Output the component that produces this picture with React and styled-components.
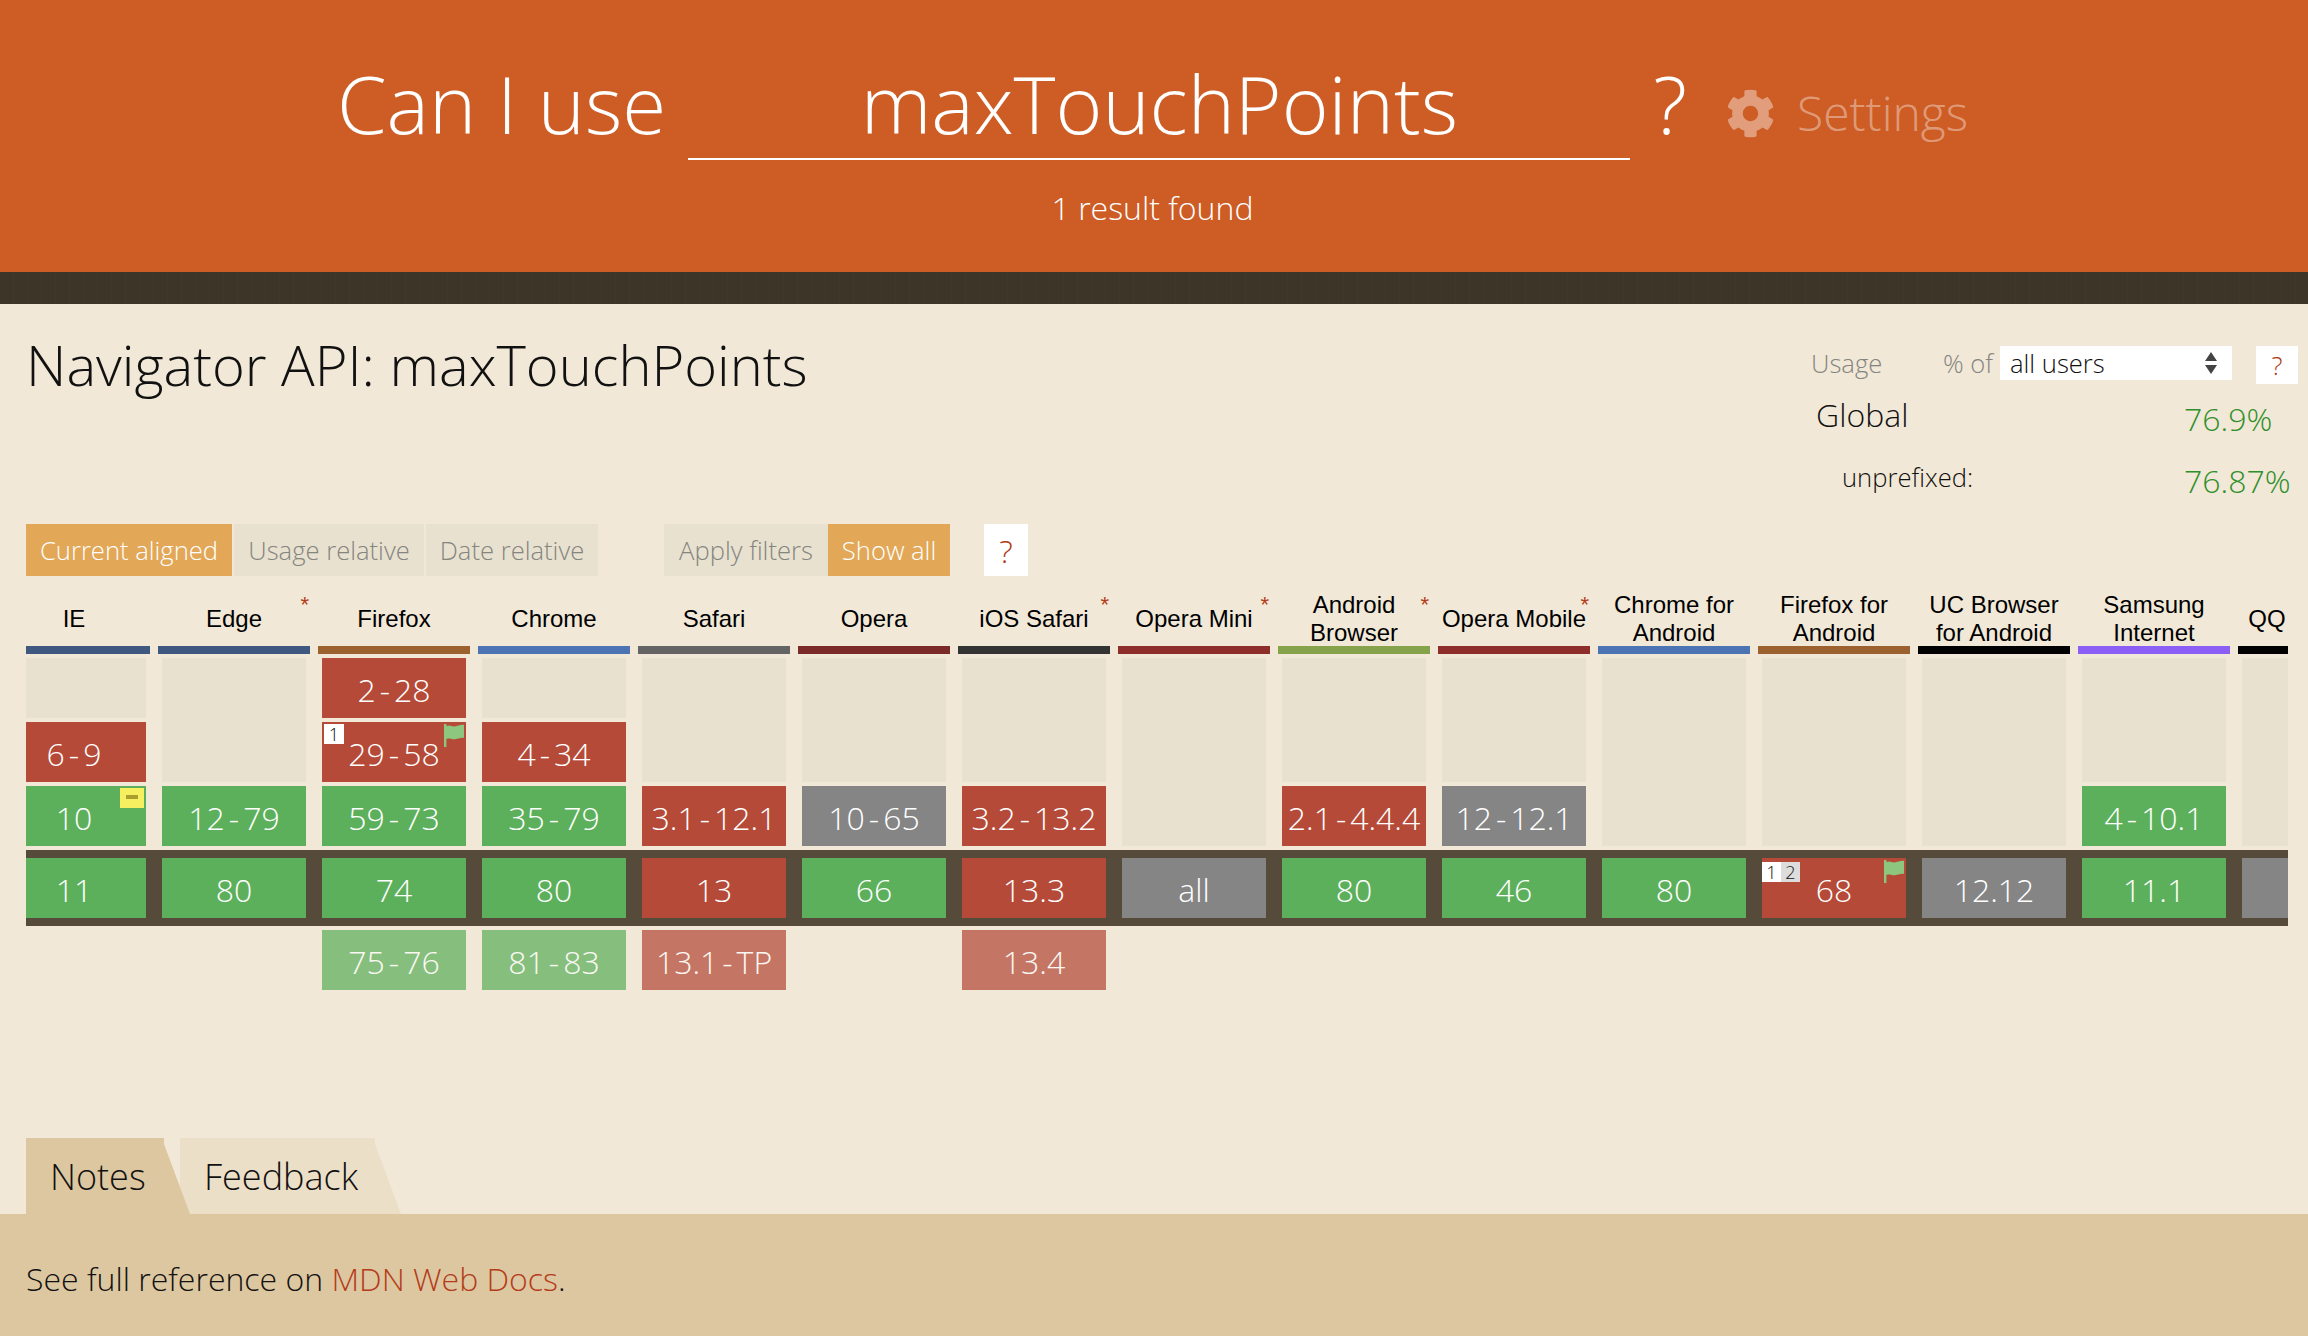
import React from 'react';
import styled, { createGlobalStyle } from 'styled-components';
import { FaCog } from 'react-icons/fa';

const sans = `"Open Sans", "Liberation Sans", sans-serif`;

const colors = {
    y: '#5db05b',
    n: '#b54a38',
    u: '#858585',
};

const browsers = [
    { name: 'IE', bar: '#3f587f', past: [{ span: 1 }, { t: 'n', v: '6-9' }, { t: 'y', v: '10', minus: true }], cur: { t: 'y', v: '11' } },
    { name: 'Edge', star: true, bar: '#3f587f', past: [{ span: 2 }, { t: 'y', v: '12-79' }], cur: { t: 'y', v: '80' } },
    { name: 'Firefox', bar: '#9b6230', past: [{ t: 'n', v: '2-28' }, { t: 'n', v: '29-58', marks: ['1'], flag: true }, { t: 'y', v: '59-73' }], cur: { t: 'y', v: '74' }, next: { t: 'y', v: '75-76' } },
    { name: 'Chrome', bar: '#4c74b2', past: [{ span: 1 }, { t: 'n', v: '4-34' }, { t: 'y', v: '35-79' }], cur: { t: 'y', v: '80' }, next: { t: 'y', v: '81-83' } },
    { name: 'Safari', bar: '#646464', past: [{ span: 2 }, { t: 'n', v: '3.1-12.1' }], cur: { t: 'n', v: '13' }, next: { t: 'n', v: '13.1-TP' } },
    { name: 'Opera', bar: '#7a2a27', past: [{ span: 2 }, { t: 'u', v: '10-65' }], cur: { t: 'y', v: '66' } },
    { name: 'iOS Safari', star: true, bar: '#333333', past: [{ span: 2 }, { t: 'n', v: '3.2-13.2' }], cur: { t: 'n', v: '13.3' }, next: { t: 'n', v: '13.4' } },
    { name: 'Opera Mini', star: true, bar: '#8d2e2b', past: [{ span: 3 }], cur: { t: 'u', v: 'all' } },
    { name: 'Android Browser', star: true, bar: '#86a24a', past: [{ span: 2 }, { t: 'n', v: '2.1-4.4.4' }], cur: { t: 'y', v: '80' } },
    { name: 'Opera Mobile', star: true, bar: '#8d2e2b', past: [{ span: 2 }, { t: 'u', v: '12-12.1' }], cur: { t: 'y', v: '46' } },
    { name: 'Chrome for Android', bar: '#4c74b2', past: [{ span: 3 }], cur: { t: 'y', v: '80' } },
    { name: 'Firefox for Android', bar: '#9b6230', past: [{ span: 3 }], cur: { t: 'n', v: '68', marks: ['1', '2'], flag: true } },
    { name: 'UC Browser for Android', bar: '#000000', past: [{ span: 3 }], cur: { t: 'u', v: '12.12' } },
    { name: 'Samsung Internet', bar: '#8b5ef5', past: [{ span: 2 }, { t: 'y', v: '4-10.1' }], cur: { t: 'y', v: '11.1' } },
    { name: 'QQ', bar: '#000000', headWidth: 50, past: [{ span: 3 }], cur: { t: 'u', v: '' } },
];

const GlobalStyle = createGlobalStyle`
    html, body {
        margin: 0;
        padding: 0;
        background: #f1e8d7;
        overflow: hidden;
    }
    body {
        font-family: ${sans};
        font-weight: 300;
    }
`;

const Page = styled.div`
    width: 2308px;
    height: 1336px;
    display: flex;
    flex-direction: column;
    overflow: hidden;
`;

const Header = styled.header`
    height: 272px;
    box-sizing: border-box;
    padding-top: 48px;
    background: #cd5d25;
    color: #fff;
`;

const SearchRow = styled.div`
    display: flex;
    justify-content: center;
    align-items: flex-start;
    height: 112px;
`;

const SearchLabel = styled.div`
    font-size: 80px;
    line-height: 110px;
    white-space: nowrap;
`;

const SearchInput = styled.div`
    width: 942px;
    height: 112px;
    box-sizing: border-box;
    margin: 0 23px 0 22px;
    border-bottom: 2px solid #fff;
    font-size: 80px;
    line-height: 110px;
    text-align: center;
`;

const SettingsLink = styled.div`
    display: flex;
    align-items: center;
    gap: 22px;
    margin: 32px 3px 0 39px;
    font-size: 48px;
    line-height: 66px;
    color: rgba(255, 255, 255, 0.4);
    svg { width: 49px; height: 49px; }
`;

const ResultCount = styled.div`
    margin-top: 26px;
    padding-right: 3px;
    text-align: center;
    font-size: 32px;
    line-height: 44px;
`;

const DarkBand = styled.div`
    height: 32px;
    background: repeating-linear-gradient(90deg, #3e3529 0 13px, #40382b 13px 14px);
`;

const Main = styled.main`
    flex: 1;
    padding-left: 26px;
`;

const TopRow = styled.div`
    display: flex;
    justify-content: space-between;
    height: 220px;
    width: 2272px;
`;

const Title = styled.h1`
    margin: 22px 0 0;
    font-size: 56px;
    line-height: 76px;
    font-weight: 300;
    color: #111;
`;

const UsagePanel = styled.div`
    width: 487px;
    padding-top: 42px;
`;

const UsageRow = styled.div`
    display: flex;
    align-items: flex-start;
    height: 38px;
    font-size: 25.6px;
    line-height: 36px;
    color: #85857f;
`;

const UsageLabel = styled.span`
    width: ${({ $w }) => $w}px;
    flex: none;
`;

const SelectBox = styled.div`
    width: 232px;
    height: 34px;
    box-sizing: border-box;
    padding: 2px 0 0 10px;
    flex: none;
    display: flex;
    align-items: center;
    justify-content: space-between;
    background: #fff;
    color: #111;
    font-size: 25.6px;
    line-height: 32px;
    svg { margin: -2px 14px 0 0; }
`;

const HelpBox = styled.div`
    display: flex;
    align-items: center;
    justify-content: center;
    flex: none;
    width: ${({ $w }) => $w}px;
    height: ${({ $h }) => $h}px;
    margin-left: ${({ $ml }) => $ml}px;
    background: #fff;
    color: #b03a16;
    font-size: ${({ $fs }) => $fs}px;
`;

const StatRow = styled.div`
    display: grid;
    grid-template-columns: 373px 1fr;
    align-items: center;
    height: ${({ $h }) => $h}px;
`;

const StatName = styled.span`
    padding-left: ${({ $pad }) => $pad}px;
    margin-top: ${({ $shift }) => $shift}px;
    font-size: ${({ $fs }) => $fs}px;
    color: #111;
`;

const StatValue = styled.span`
    margin-top: 6px;
    font-size: 32px;
    color: #2f8f2a;
`;

const ControlRow = styled.div`
    display: flex;
    align-items: stretch;
    height: 52px;
`;

const ToggleButton = styled.div`
    display: flex;
    align-items: center;
    justify-content: center;
    box-sizing: border-box;
    width: ${({ $w }) => $w}px;
    margin-right: ${({ $mr }) => $mr || 0}px;
    font-size: 25.6px;
    white-space: nowrap;
    background: ${({ $on }) => ($on ? '#e2a858' : '#e8e1cf')};
    color: ${({ $on }) => ($on ? '#fff' : '#85857f')};
`;

const TableClip = styled.div`
    width: 2262px;
    margin-top: 10px;
    overflow: hidden;
`;

const TableInner = styled.div`
    margin-left: -32px;
    width: 2400px;
`;

const ColGrid = styled.div`
    display: grid;
    grid-template-columns: repeat(15, 160px);
`;

const BrowserHead = styled.div`
    position: relative;
    height: 68px;
    margin: 0 4px;
    width: ${({ $w }) => ($w ? `${$w}px` : 'auto')};
    box-sizing: border-box;
    padding: 5px 0 0 ${({ $w }) => ($w ? 8 : 0)}px;
    border-bottom: 8px solid ${({ $bar }) => $bar};
    display: flex;
    align-items: center;
    justify-content: center;
    text-align: center;
    font-family: "Liberation Sans", Arial, sans-serif;
    font-weight: 400;
    font-size: 24px;
    line-height: 28px;
    color: #000;
`;

const HeadStar = styled.span`
    position: absolute;
    top: 15px;
    right: 1px;
    font-size: 22px;
    line-height: 8px;
    color: #b43c1b;
`;

const PastCol = styled.div`
    display: flex;
    flex-direction: column;
    gap: 4px;
    padding: 4px 8px;
`;

const Cell = styled.div`
    position: relative;
    box-sizing: border-box;
    height: ${({ $span }) => 60 * $span + 4 * ($span - 1)}px;
    padding-top: 4px;
    display: flex;
    align-items: center;
    justify-content: center;
    font-size: 32px;
    line-height: 56px;
    white-space: nowrap;
    color: #fff;
    background: ${({ $bg }) => $bg};
    opacity: ${({ $future }) => ($future ? 0.72 : 1)};
`;

const Dash = styled.span`
    margin: 0 4px;
`;

const Band = styled.div`
    background: #564b3b;
    padding: 8px 0;
`;

const BandCol = styled.div`
    padding: 0 8px;
`;

const FutureGrid = styled(ColGrid)`
    padding-top: 4px;
`;

const Marks = styled.div`
    position: absolute;
    top: ${({ $top }) => $top}px;
    left: ${({ $left }) => $left}px;
    display: flex;
`;

const Mark = styled.span`
    width: ${({ $w }) => $w}px;
    height: 20px;
    display: flex;
    align-items: center;
    justify-content: center;
    font-size: 18px;
    line-height: 20px;
    color: #111;
    background: ${({ $second }) => ($second ? '#dddddd' : '#ffffff')};
`;

const MinusNote = styled.span`
    position: absolute;
    top: 2px;
    right: 2px;
    width: 24px;
    height: 20px;
    background: #f6f060;
    &::after {
        content: '';
        position: absolute;
        left: 6px;
        top: 7px;
        width: 12px;
        height: 4px;
        background: #a89f2f;
    }
`;

const FlagIcon = styled.svg`
    position: absolute;
    top: 2px;
    right: 2px;
    width: 20px;
    height: 23px;
`;

const Tabs = styled.div`
    display: flex;
    margin-top: 148px;
    height: 76px;
`;

const Tab = styled.div`
    position: relative;
    z-index: ${({ $on }) => ($on ? 1 : 0)};
    width: ${({ $w }) => $w}px;
    margin-right: ${({ $mr }) => $mr}px;
    box-sizing: border-box;
    padding-left: ${({ $pad }) => $pad}px;
    font-size: 36px;
    line-height: 78px;
    color: #111;
    background: ${({ $on }) => ($on ? '#ddc7a0' : '#ecdfc8')};
    clip-path: polygon(0 0, calc(100% - 26px) 0, calc(100% - 26px) 6px, 100% 100%, 0 100%);
`;

const NotesPanel = styled.div`
    margin-left: -26px;
    height: 122px;
    box-sizing: border-box;
    padding: 43px 0 0 26px;
    background: #ddc7a0;
    font-size: 32px;
    line-height: 44px;
    color: #111;
`;

const NotesLink = styled.a`
    color: #b43c1b;
`;

const Flag = () => (
    <FlagIcon viewBox="0 0 20 23">
        <path fill="#8dc77f" d="M0 0h2.400v23H0z M2.400 2c3-1.600 5 .6 8.200 .4 3-.2 6-2.200 9.400-1.600V14c-3-.8-6 1-9 1.200-3.200 .2-5.800-1.600-8.600-.2z" />
    </FlagIcon>
);

const Range = ({ value }) => {
    const parts = value.split('-');
    if (parts.length < 2) return value;
    return <>{parts[0]}<Dash>-</Dash>{parts[1]}</>;
};

const VersionCell = ({ data, future }) => {
    if (!data) return null;
    if (data.span) return <Cell $span={data.span} $bg="#e8e1cf" />;
    const second = data.marks && data.marks.length > 1;
    return (
        <Cell $span={1} $bg={colors[data.t]} $future={future}>
            <Range value={data.v} />
            {data.marks && (
                <Marks $top={second ? 4 : 2} $left={second ? 0 : 2}>
                    {data.marks.map((m, i) => <Mark key={m} $w={second ? 19 : 20} $second={i > 0}>{m}</Mark>)}
                </Marks>
            )}
            {data.flag && <Flag />}
            {data.minus && <MinusNote />}
        </Cell>
    );
};

const App = () => (
    <Page>
        <GlobalStyle />
        <Header>
            <SearchRow>
                <SearchLabel>Can I use</SearchLabel>
                <SearchInput>maxTouchPoints</SearchInput>
                <SearchLabel>?</SearchLabel>
                <SettingsLink><FaCog />Settings</SettingsLink>
            </SearchRow>
            <ResultCount>1 result found</ResultCount>
        </Header>
        <DarkBand />
        <Main>
            <TopRow>
                <Title>Navigator API: maxTouchPoints</Title>
                <UsagePanel>
                    <UsageRow>
                        <UsageLabel $w={132}>Usage</UsageLabel>
                        <UsageLabel $w={57}>% of</UsageLabel>
                        <SelectBox>
                            all users
                            <svg width="14" height="24" viewBox="0 0 14 24">
                                <path fill="#444" d="M7 1l6 9H1z M7 23l-6-9h12z" />
                            </svg>
                        </SelectBox>
                        <HelpBox $w={42} $h={38} $ml={24} $fs={26}>?</HelpBox>
                    </UsageRow>
                    <StatRow $h={62}>
                        <StatName $pad={5} $fs={32} $shift={-1}>Global</StatName>
                        <StatValue>76.9%</StatValue>
                    </StatRow>
                    <StatRow $h={62}>
                        <StatName $pad={31} $fs={25.6} $shift={0}>unprefixed:</StatName>
                        <StatValue>76.87%</StatValue>
                    </StatRow>
                </UsagePanel>
            </TopRow>
            <ControlRow>
                <ToggleButton $on $w={206} $mr={2}>Current aligned</ToggleButton>
                <ToggleButton $w={190} $mr={2}>Usage relative</ToggleButton>
                <ToggleButton $w={172} $mr={66}>Date relative</ToggleButton>
                <ToggleButton $w={164}>Apply filters</ToggleButton>
                <ToggleButton $on $w={122} $mr={34}>Show all</ToggleButton>
                <HelpBox $w={44} $h={52} $ml={0} $fs={32}>?</HelpBox>
            </ControlRow>
            <TableClip>
                <TableInner>
                    <ColGrid>
                        {browsers.map((b) => (
                            <BrowserHead key={b.name} $bar={b.bar} $w={b.headWidth}>
                                <span>{b.name}</span>
                                {b.star && <HeadStar>*</HeadStar>}
                            </BrowserHead>
                        ))}
                    </ColGrid>
                    <ColGrid>
                        {browsers.map((b) => (
                            <PastCol key={b.name}>
                                {b.past.map((p, i) => <VersionCell key={i} data={p} />)}
                            </PastCol>
                        ))}
                    </ColGrid>
                    <Band>
                        <ColGrid>
                            {browsers.map((b) => (
                                <BandCol key={b.name}><VersionCell data={b.cur} /></BandCol>
                            ))}
                        </ColGrid>
                    </Band>
                    <FutureGrid>
                        {browsers.map((b) => (
                            <BandCol key={b.name}><VersionCell data={b.next} future /></BandCol>
                        ))}
                    </FutureGrid>
                </TableInner>
            </TableClip>
            <Tabs>
                <Tab $on $w={164} $mr={-10} $pad={24}>Notes</Tab>
                <Tab $w={221} $mr={0} $pad={24}>Feedback</Tab>
            </Tabs>
            <NotesPanel>
                See full reference on <NotesLink>MDN Web Docs</NotesLink>.
            </NotesPanel>
        </Main>
    </Page>
);

export default App;
